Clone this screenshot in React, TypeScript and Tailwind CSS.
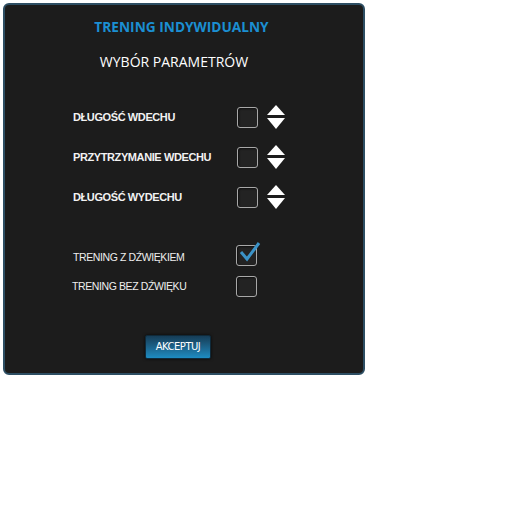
import React from "react";

function Box({ checked = false }: { checked?: boolean }) {
  return (
    <div className="relative w-[21px] h-[21px] rounded-[3px] border border-[#a8a8a8] bg-[#232323] shadow-[inset_1px_1px_2px_rgba(0,0,0,0.6)]">
      {checked && (
        <svg className="absolute left-[2px] top-[-5px]" width="22" height="22" viewBox="0 0 22 22">
          <path d="M2 11 L8 18 L20 2" fill="none" stroke="#3b93c8" strokeWidth="3" strokeLinejoin="miter" />
        </svg>
      )}
    </div>
  );
}

function Arrows() {
  return (
    <svg width="20" height="25" viewBox="0 0 20 25">
      <polygon points="10,0 19,10 1,10" fill="#ffffff" />
      <polygon points="1,13 19,13 10,24" fill="#ffffff" />
    </svg>
  );
}

const params = ["DŁUGOŚĆ WDECHU", "PRZYTRZYMANIE WDECHU", "DŁUGOŚĆ WYDECHU"];

export default function App() {
  return (
    <div className="w-[512px] h-[512px] bg-white pt-[3px] pl-[3px]">
      <div className="w-[362px] h-[372px] rounded-[6px] border-2 border-[#2d4e63] bg-[#1c1c1c] flex flex-col">
        <h1 className="mt-[13px] pr-[5px] text-center text-[13.7px] leading-[18px] font-bold text-[#1b8fd2] [font-family:'Open_Sans',sans-serif]">
          TRENING INDYWIDUALNY
        </h1>
        <h2 className="mt-[16px] pr-[20px] text-center text-[14px] leading-[20px] text-white [font-family:'Open_Sans',sans-serif]">
          WYBÓR PARAMETRÓW
        </h2>
        <div className="mt-[33px] pl-[68px] flex flex-col gap-[16px] [font-family:'Liberation_Sans',Arial,sans-serif]">
          {params.map((p) => (
            <div key={p} className="flex items-center h-[24px]">
              <span className="w-[164px] text-[11px] font-bold tracking-[-0.4px] text-[#f2f2f2]">{p}</span>
              <Box />
              <div className="ml-[8px]">
                <Arrows />
              </div>
            </div>
          ))}
        </div>
        <div className="mt-[36px] pl-[67px] flex flex-col gap-[10px] [font-family:'Liberation_Sans',Arial,sans-serif]">
          <div className="flex items-center h-[21px]">
            <span className="w-[164px] pl-[1px] pt-[5px] text-[10.5px] tracking-[-0.4px] text-[#eeeeee]">TRENING Z DŹWIĘKIEM</span>
            <Box checked />
          </div>
          <div className="flex items-center h-[21px]">
            <span className="w-[164px] text-[10.5px] tracking-[-0.4px] text-[#eeeeee]">TRENING BEZ DŹWIĘKU</span>
            <Box />
          </div>
        </div>
        <div className="mt-[35px] pl-[140px]">
          <button className="w-[66px] h-[24px] rounded-[2px] border border-[#0f2a3a] bg-gradient-to-b from-[#163d57] to-[#1d8cc2] text-[10px] text-white shadow-[0_0_3px_rgba(0,0,0,0.8)] [font-family:'DejaVu_Sans',sans-serif] tracking-[-0.5px]">
            AKCEPTUJ
          </button>
        </div>
      </div>
    </div>
  );
}
